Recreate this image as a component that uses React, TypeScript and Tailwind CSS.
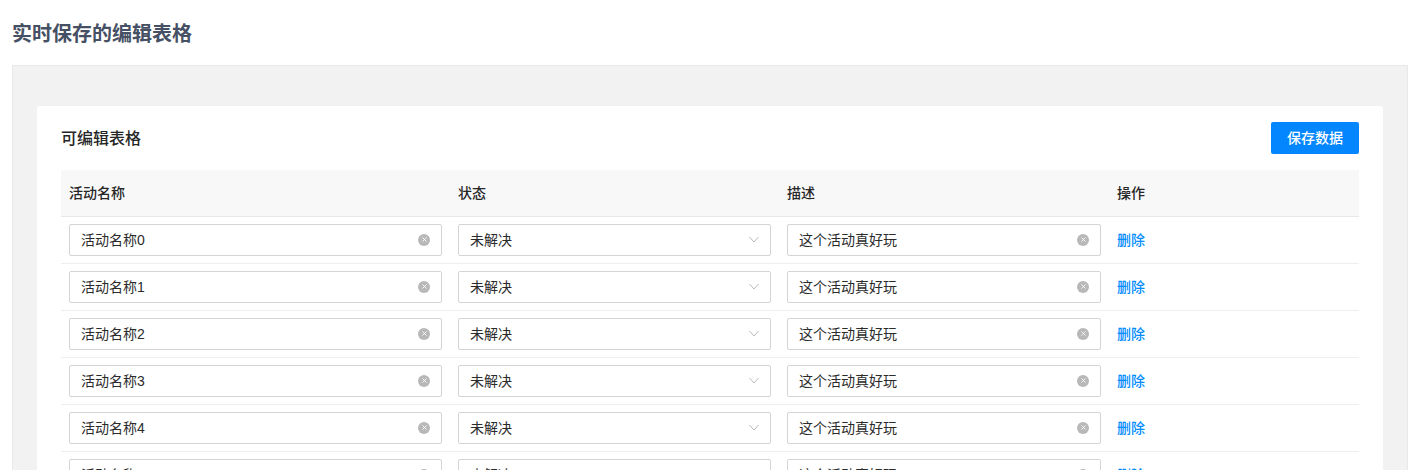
import { X } from 'lucide-react'

const rows = [0, 1, 2, 3, 4, 5]

function ClearIcon() {
  return (
    <span className="flex h-3 w-3 items-center justify-center rounded-full bg-[#b8b8b8]">
      <X size={7} strokeWidth={3} color="#ffffff" />
    </span>
  )
}

function TextField({ value }: { value: string }) {
  return (
    <div className="flex h-8 items-center justify-between rounded-[2px] border border-[#d4d4d4] bg-white px-[11px] text-sm text-[#2b2b2b]">
      <span>{value}</span>
      <ClearIcon />
    </div>
  )
}

function SelectField({ value }: { value: string }) {
  return (
    <div className="flex h-8 items-center justify-between rounded-[2px] border border-[#d4d4d4] bg-white px-[11px] text-sm text-[#2b2b2b]">
      <span>{value}</span>
      <svg width="10" height="7" viewBox="0 0 10 7" fill="none">
        <path d="M0.5 1L5 6L9.5 1" stroke="#b8b8b8" strokeWidth="1" />
      </svg>
    </div>
  )
}

export default function App() {
  return (
    <div className="h-[470px] overflow-hidden bg-white pl-3 pr-[7px] font-['Liberation_Sans','Noto_Sans_CJK_SC',sans-serif]">
      <h1 className="flex h-[65px] items-center pt-[3px] text-xl font-bold text-[#465064]">
        实时保存的编辑表格
      </h1>
      <div className="h-[500px] border border-[#e8e8e8] bg-[#f2f2f2] px-6 pt-10">
        <div className="rounded-[2px] bg-white px-6 pt-4">
          <div className="mb-4 flex h-8 items-center justify-between">
            <h2 className="pt-[2px] text-base font-medium text-[#262626]">可编辑表格</h2>
            <button className="h-8 w-[88px] rounded-[2px] bg-[#0486fe] text-sm font-medium text-white">
              保存数据
            </button>
          </div>
          <table className="w-full table-fixed text-sm">
            <colgroup>
              <col className="w-[389px]" />
              <col className="w-[329px]" />
              <col className="w-[330px]" />
              <col />
            </colgroup>
            <thead>
              <tr className="h-[46px] border-b border-[#e8e8e8] bg-[#f8f8f8] text-left text-[#262626]">
                <th className="px-2 font-medium">活动名称</th>
                <th className="px-2 font-medium">状态</th>
                <th className="px-2 font-medium">描述</th>
                <th className="px-2 font-medium">操作</th>
              </tr>
            </thead>
            <tbody>
              {rows.map((n) => (
                <tr key={n} className="h-[47px] border-b border-[#eeeeee]">
                  <td className="px-2">
                    <TextField value={'活动名称' + n} />
                  </td>
                  <td className="px-2">
                    <SelectField value="未解决" />
                  </td>
                  <td className="px-2">
                    <TextField value="这个活动真好玩" />
                  </td>
                  <td className="px-2">
                    <a className="font-medium text-[#008cff]">删除</a>
                  </td>
                </tr>
              ))}
            </tbody>
          </table>
        </div>
      </div>
    </div>
  )
}
